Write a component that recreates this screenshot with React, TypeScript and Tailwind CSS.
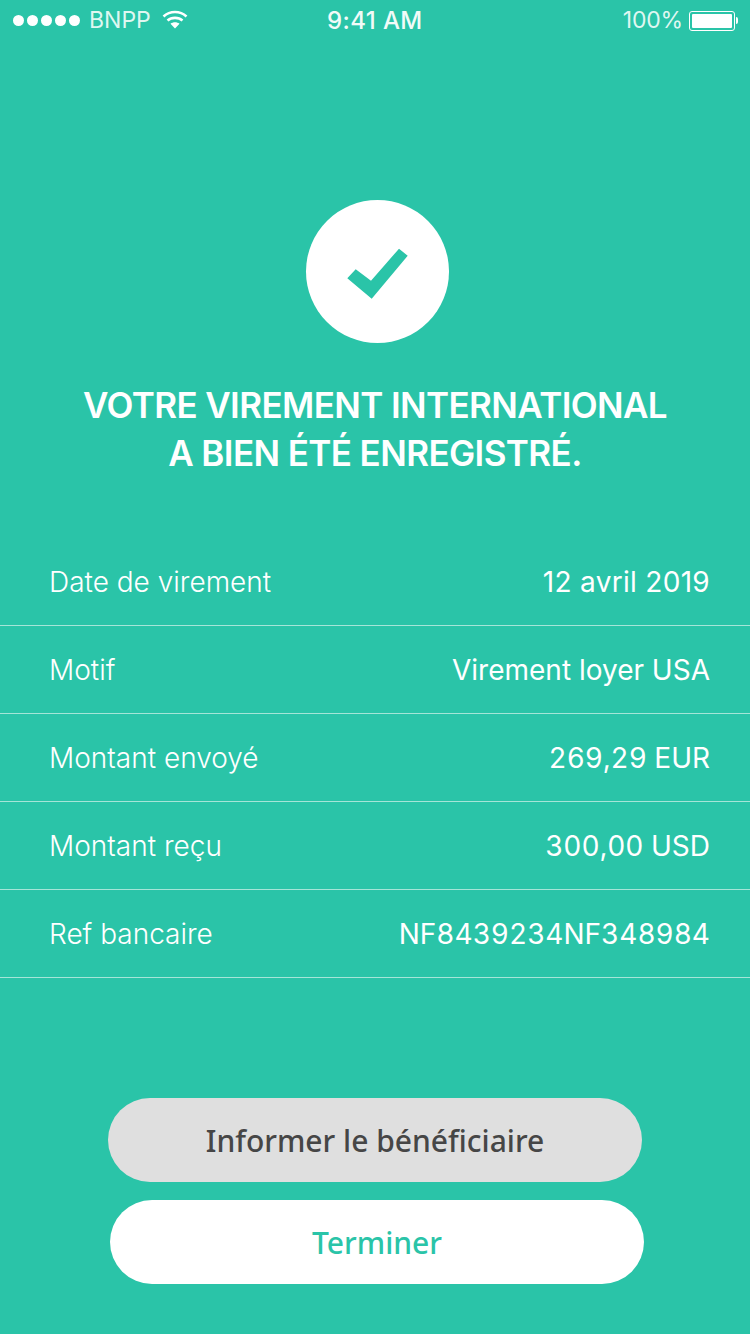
const ROWS = [
  { label: 'Date de virement', value: '12 avril 2019', numClass: 'tracking-[0.3px]' },
  { label: 'Motif', value: 'Virement loyer USA', numClass: '' },
  { label: 'Montant envoyé', value: '269,29 EUR', numClass: 'tabular-nums' },
  { label: 'Montant reçu', value: '300,00 USD', numClass: 'tabular-nums' },
  { label: 'Ref bancaire', value: 'NF8439234NF348984', numClass: 'tabular-nums' },
];

function StatusBar() {
  return (
    <div className="relative flex h-10 items-center justify-between pl-[13px] pr-[12px] pt-[1px] text-[23px] text-[#dff7f1]">
      <div className="flex items-center">
        <div className="flex gap-[3px]">
          {[1, 2, 3, 4, 5].map(i => (
            <div key={i} className="h-[11px] w-[11px] rounded-full bg-white"></div>
          ))}
        </div>
        <span className="ml-[9px] leading-none">BNPP</span>
        <svg className="ml-[11px] -mt-[3px]" width="26" height="20" viewBox="0 0 26 20" fill="none" stroke="#ffffff" strokeWidth="2.6">
          <path d="M1.5 7.5C8 1.5 18 1.5 24.5 7.5" />
          <path d="M5.5 11.5C9.5 8 16.500 8 20.500 11.500" />
          <path d="M13 19.500L8.500 14.800C11 12.800 15 12.800 17.500 14.800Z" fill="#ffffff" stroke="none" />
        </svg>
      </div>
      <span className="absolute left-[327px] top-[8px] text-[24px] font-medium leading-[26px] tracking-[0.4px] text-[#f1fbf8]">9:41 AM</span>
      <div className="flex items-center">
        <span className="leading-none tracking-[-0.2px]">100%</span>
        <div className="ml-[6px] h-[20px] w-[46px] rounded-[3px] border border-white p-[2px]">
          <div className="h-full w-full rounded-[1px] bg-white"></div>
        </div>
        <div className="ml-[1px] h-[7px] w-[2px] rounded-r-sm bg-white"></div>
      </div>
    </div>
  );
}

export default function App() {
  return (
    <div className="flex h-[1334px] w-[750px] flex-col overflow-hidden bg-[#2ac4a8] font-['Inter',sans-serif] text-white">
      <StatusBar />

      {/* Check */}
      <div className="ml-[306px] mt-[160px] flex h-[143px] w-[143px] items-center justify-center rounded-full bg-white">
        <svg width="143" height="143" viewBox="0 0 143 143">
          <path d="M41.300 78.300L49.700 69.300L65 80.700L93 48.700L101.700 55.700L65.700 98.700Z" fill="#2ac4a8" />
        </svg>
      </div>

      <h1 className="mt-[38px] text-center text-[35px] font-semibold leading-[48px] tracking-[-0.6px]">
        VOTRE VIREMENT INTERNATIONAL
        <br />
        A BIEN ÉTÉ ENREGISTRÉ.
      </h1>

      {/* Details */}
      <div className="mt-[61px]">
        {ROWS.map(row => (
          <div key={row.label} className="flex h-[88px] items-center justify-between border-b border-[#a5e5d8] pl-[49px] pr-[40px] pt-[1px] text-[28px]">
            <span className="font-light">{row.label}</span>
            <span className={row.numClass}>{row.value}</span>
          </div>
        ))}
      </div>

      {/* Buttons */}
      <div className="mt-[120px] flex flex-col gap-[18px] font-['Noto_Sans',sans-serif] text-[30px] font-medium">
        <button className="ml-[108px] h-[84px] w-[534px] rounded-full bg-[#dfdfdf] text-[#464646]">Informer le bénéficiaire</button>
        <button className="ml-[110px] h-[84px] w-[534px] rounded-full bg-white text-[#2ac4a8]">Terminer</button>
      </div>
    </div>
  );
}
